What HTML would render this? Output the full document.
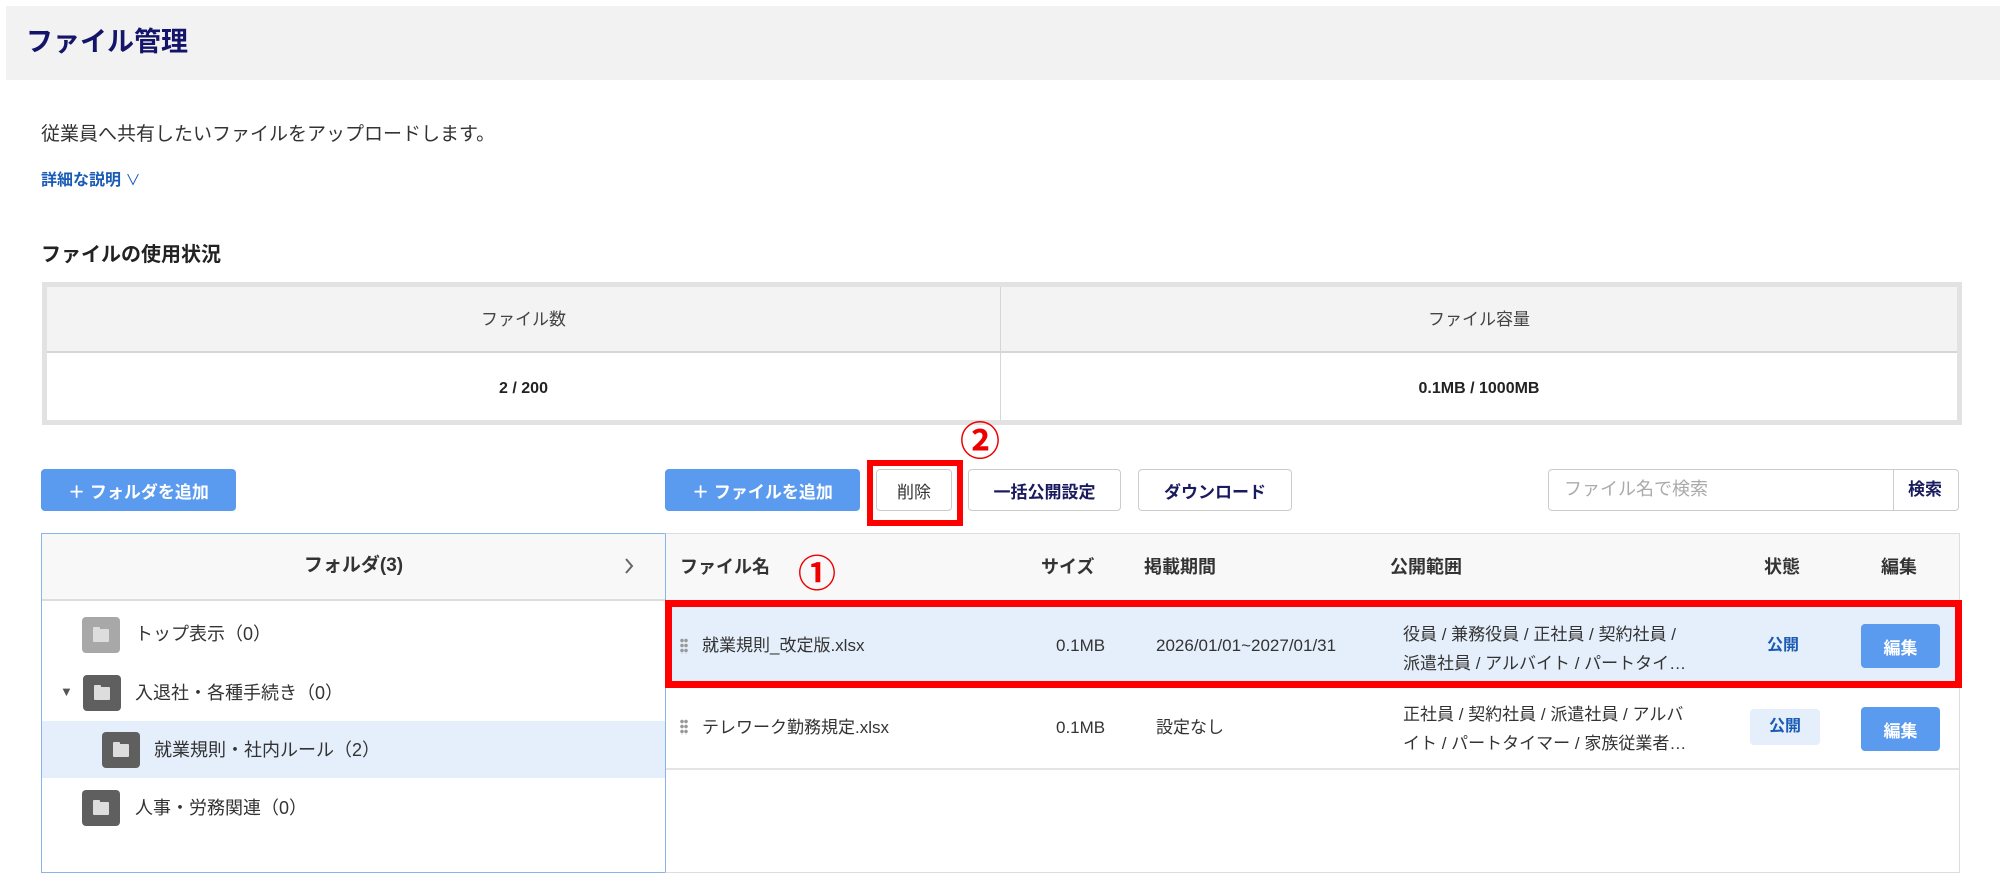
<!DOCTYPE html>
<html><head><meta charset="utf-8"><style>
*{box-sizing:border-box;margin:0;padding:0}
body{width:2000px;height:869px;overflow:hidden;background:#fff;font-family:"Liberation Sans","Noto Sans CJK JP",sans-serif;color:#333;position:relative}
.a{position:absolute;white-space:nowrap;line-height:1.3}
.btn{position:absolute;height:42px;border:1px solid #ccc;border-radius:4px;background:#fff;display:flex;align-items:center;justify-content:center;font-size:17px;font-weight:bold;color:#1a1a5e}
.pb{background:#5b9bef;border-color:#5b9bef;color:#fff}
.fi{position:absolute;width:38px;height:36px;border-radius:4px;background:#5f5f5f}
.fi:after{content:"";position:absolute;left:11px;top:12px;width:16px;height:13px;background:#ddd;border-radius:1px}
.fi:before{content:"";position:absolute;left:11px;top:10px;width:7px;height:3px;background:#ddd;border-radius:1px 1px 0 0}
.dots{position:absolute;width:8px;height:16px;background:radial-gradient(circle,#999 1.6px,transparent 2px) 0 0/4px 5px}
.vc{display:flex;align-items:center}
.t{font-size:17px;line-height:24px}
</style></head><body>
<div class="a" style="left:6px;top:6px;width:1994px;height:74px;background:#f2f2f2"></div>
<div class="a" style="left:26px;top:25px;font-size:27px;font-weight:bold;color:#14146b">ファイル管理</div>
<div class="a" style="left:41px;top:123px;font-size:19px;color:#333">従業員へ共有したいファイルをアップロードします。</div>
<div class="a" style="left:41px;top:171px;font-size:16px;font-weight:bold;color:#1a5bb5">詳細な説明 <span style="font-weight:normal;font-size:15px">∨</span></div>
<div class="a" style="left:41px;top:242px;font-size:20px;font-weight:bold;color:#222">ファイルの使用状況</div>

<div class="a" style="left:42px;top:282px;width:1920px;height:143px;border:5px solid #e2e2e2;background:#fff">
 <div class="a" style="left:0;top:0;width:100%;height:66px;background:#f3f3f3;border-bottom:2px solid #d6d6d6"></div>
 <div class="a" style="left:953px;top:0;width:1px;height:100%;background:#d6d6d6"></div>
 <div class="a" style="left:0;top:22px;width:953px;text-align:center;font-size:17px;color:#444">ファイル数</div>
 <div class="a" style="left:954px;top:22px;width:956px;text-align:center;font-size:17px;color:#444">ファイル容量</div>
 <div class="a" style="left:0;top:92px;width:953px;text-align:center;font-size:16px;font-weight:bold;color:#222">2 / 200</div>
 <div class="a" style="left:954px;top:92px;width:956px;text-align:center;font-size:16px;font-weight:bold;color:#222">0.1MB / 1000MB</div>
</div>

<div class="btn pb" style="left:41px;top:469px;width:195px">＋ フォルダを追加</div>
<div class="btn pb" style="left:665px;top:469px;width:195px">＋ ファイルを追加</div>
<div class="btn" style="left:876px;top:469px;width:76px;font-weight:normal;color:#333">削除</div>
<div class="a" style="left:867px;top:460px;width:96px;height:66px;border:6px solid #f00"></div>
<div class="a" style="left:958px;top:420px;width:44px;height:44px;font-size:40px;line-height:44px;color:#e00;font-weight:bold;text-align:center">②</div>
<div class="btn" style="left:968px;top:469px;width:153px">一括公開設定</div>
<div class="btn" style="left:1138px;top:469px;width:154px">ダウンロード</div>
<div class="a" style="left:1548px;top:469px;width:411px;height:42px;border:1px solid #ccc;border-radius:4px"></div>
<div class="a" style="left:1893px;top:469px;width:1px;height:42px;background:#ccc"></div>
<div class="a" style="left:1564px;top:478px;font-size:18px;color:#aaa">ファイル名で検索</div>
<div class="a" style="left:1908px;top:479px;font-size:17px;font-weight:bold;color:#1a1a5e">検索</div>

<!-- left panel -->
<div class="a" style="left:41px;top:533px;width:625px;height:340px;border:1px solid #8ab4e8"></div>
<div class="a" style="left:42px;top:534px;width:623px;height:67px;background:#f8f8f8;border-bottom:2px solid #ddd"></div>
<div class="a" style="left:42px;top:554px;width:623px;text-align:center;font-size:19px;font-weight:bold;color:#333">フォルダ(3)</div>
<svg class="a" style="left:623px;top:557px" width="12" height="18" viewBox="0 0 12 18"><path d="M3 2 L9 9 L3 16" fill="none" stroke="#666" stroke-width="2"/></svg>
<div class="fi" style="left:82px;top:617px;background:#a8a8a8"></div>
<div class="a" style="left:135px;top:623px;font-size:18px">トップ表示（0）</div>
<div class="a" style="left:60px;top:684px;font-size:13px;color:#555">▼</div>
<div class="fi" style="left:83px;top:675px"></div>
<div class="a" style="left:135px;top:682px;font-size:18px">入退社・各種手続き（0）</div>
<div class="a" style="left:42px;top:721px;width:623px;height:57px;background:#e5effb"></div>
<div class="fi" style="left:102px;top:732px"></div>
<div class="a" style="left:154px;top:739px;font-size:18px">就業規則・社内ルール（2）</div>
<div class="fi" style="left:82px;top:790px"></div>
<div class="a" style="left:135px;top:797px;font-size:18px">人事・労務関連（0）</div>

<!-- right table -->
<div class="a" style="left:665px;top:533px;width:1295px;height:340px;border:1px solid #ddd;border-left:1px solid #8ab4e8"></div>
<div class="a" style="left:666px;top:534px;width:1293px;height:67px;background:#f8f8f8;border-bottom:1px solid #ddd"></div>
<div class="a" style="left:680px;top:556px;font-size:18px;font-weight:bold">ファイル名</div>
<div class="a" style="left:798px;top:553px;font-size:38px;line-height:44px;color:#e00;font-weight:bold">①</div>
<div class="a" style="left:1041px;top:556px;font-size:18px;font-weight:bold">サイズ</div>
<div class="a" style="left:1144px;top:556px;font-size:18px;font-weight:bold">掲載期間</div>
<div class="a" style="left:1390px;top:556px;font-size:18px;font-weight:bold">公開範囲</div>
<div class="a" style="left:1764px;top:556px;font-size:18px;font-weight:bold">状態</div>
<div class="a" style="left:1881px;top:556px;font-size:18px;font-weight:bold">編集</div>

<div class="a" style="left:666px;top:602px;width:1293px;height:82px;background:#e5effb"></div>
<div class="dots" style="left:680px;top:638px"></div>
<div class="a t" style="left:702px;top:634px">就業規則_改定版.xlsx</div>
<div class="a t" style="left:1056px;top:634px">0.1MB</div>
<div class="a t" style="left:1156px;top:634px">2026/01/01~2027/01/31</div>
<div class="a" style="left:1403px;top:620px;font-size:17px;line-height:29px">役員 / 兼務役員 / 正社員 / 契約社員 /<br>派遣社員 / アルバイト / パートタイ…</div>
<div class="a" style="left:1767px;top:634px;font-size:16px;line-height:24px;font-weight:bold;color:#1a5bb5">公開</div>
<div class="btn pb" style="left:1861px;top:624px;width:79px;height:44px">編集</div>
<div class="a" style="left:665px;top:600px;width:1297px;height:88px;border:7px solid #f00"></div>

<div class="a" style="left:666px;top:768px;width:1293px;height:2px;background:#e4e4e4"></div>
<div class="dots" style="left:680px;top:719px"></div>
<div class="a t" style="left:702px;top:716px">テレワーク勤務規定.xlsx</div>
<div class="a t" style="left:1056px;top:716px">0.1MB</div>
<div class="a t" style="left:1156px;top:716px">設定なし</div>
<div class="a" style="left:1403px;top:700px;font-size:17px;line-height:29px">正社員 / 契約社員 / 派遣社員 / アルバ<br>イト / パートタイマー / 家族従業者…</div>
<div class="a vc" style="left:1750px;top:709px;width:70px;height:36px;background:#e5effb;border-radius:4px;justify-content:center;font-size:16px;font-weight:bold;color:#1a5bb5">公開</div>
<div class="btn pb" style="left:1861px;top:707px;width:79px;height:44px">編集</div>
</body></html>
